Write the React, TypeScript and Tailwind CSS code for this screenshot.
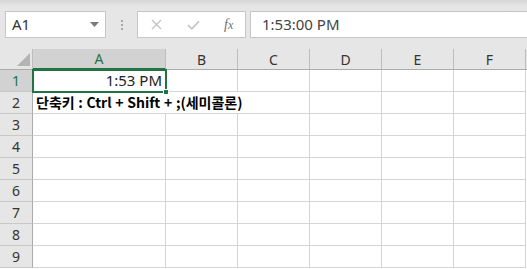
import React from "react";

const cols = [
  { key: "A", w: "w-[133px]" },
  { key: "B", w: "w-[72px]" },
  { key: "C", w: "w-[72px]" },
  { key: "D", w: "w-[72px]" },
  { key: "E", w: "w-[72px]" },
  { key: "F", w: "w-[72px]" },
];

const rows = [1, 2, 3, 4, 5, 6, 7, 8, 9];

export default function App() {
  return (
    <div
      className="relative w-[527px] h-[269px] overflow-hidden bg-white text-[#222]"
      style={{ fontFamily: '"Noto Sans", "Noto Sans CJK KR", sans-serif' }}
    >
      {/* Formula bar */}
      <div className="relative h-[49px] bg-[#e6e6e6] bg-gradient-to-b from-[#d6d6d6] via-[#e6e6e6] via-[12%] to-[#e6e6e6]">
        <div className="flex pt-[11px] pl-[5px]">
          {/* Name box */}
          <div className="flex items-center justify-between w-[101px] h-[27px] bg-white border border-[#c6c6c6] pl-[6px] pr-[6px]">
            <span className="text-[15px] text-[#333] leading-none">A1</span>
            <svg width="9" height="5" viewBox="0 0 9 5">
              <path d="M0 0 L9 0 L4.5 5 Z" fill="#7a7a7a" />
            </svg>
          </div>
          {/* Splitter dots */}
          <div className="flex flex-col gap-[2px] items-center justify-center w-[31px] h-[27px]">
            <span className="w-[2px] h-[2px] bg-[#a8a8a8]" />
            <span className="w-[2px] h-[2px] bg-[#a8a8a8]" />
            <span className="w-[2px] h-[2px] bg-[#a8a8a8]" />
          </div>
          {/* Cancel / Enter / fx */}
          <div className="flex items-center w-[109px] h-[27px] bg-white border border-[#c6c6c6]">
            <svg className="ml-[13px]" width="11" height="11" viewBox="0 0 11 11">
              <path d="M1 1 L10 10 M10 1 L1 10" stroke="#c2c2c2" strokeWidth="1.3" />
            </svg>
            <svg className="ml-[25px]" width="13" height="10" viewBox="0 0 13 10">
              <path d="M1 5 L4.8 8.8 L12 1.2" stroke="#c2c2c2" strokeWidth="1.6" fill="none" />
            </svg>
            <span
              className="ml-[24px] text-[14px] italic text-[#6e6e6e] leading-none"
              style={{ fontFamily: '"Liberation Serif", serif' }}
            >
              f<span className="text-[12px]">x</span>
            </span>
          </div>
          {/* Formula input */}
          <div className="flex items-center ml-[4px] flex-1 h-[27px] bg-white border border-[#c6c6c6] border-r-0 pl-[11px]">
            <span className="text-[15px] text-[#444] leading-none">1:53:00 PM</span>
          </div>
        </div>
      </div>

      {/* Column headers */}
      <div className="flex h-[21px] bg-[#e6e6e6] border-b border-[#ababab]">
        <div className="relative w-[33px] border-r border-[#bdbdbd]">
          <svg className="absolute left-[16px] top-[3px]" width="15" height="15" viewBox="0 0 15 15">
            <path d="M14 1 L14 14 L1 14 Z" fill="#b4b4b4" />
          </svg>
        </div>
        {cols.map((c) => (
          <div
            key={c.key}
            className={
              c.key === "A"
                ? `${c.w} flex items-center justify-center text-[14px] text-[#217346] bg-[#d2d2d2] border-r border-[#bdbdbd] border-b-2 border-b-[#217346] mb-[-1px]`
                : `${c.w} flex items-center justify-center text-[14px] text-[#333] border-r border-[#bdbdbd]`
            }
          >
            {c.key}
          </div>
        ))}
      </div>

      {/* Rows */}
      {rows.map((r) => (
        <div key={r} className="flex h-[22px]">
          <div
            className={
              r === 1
                ? "w-[33px] flex items-center justify-center text-[14px] text-[#217346] bg-[#d2d2d2] border-r border-b border-[#ababab] border-b-[#c8c8c8]"
                : "w-[33px] flex items-center justify-center text-[14px] text-[#333] bg-[#e6e6e6] border-r border-b border-[#ababab] border-b-[#c8c8c8]"
            }
          >
            {r}
          </div>
          {cols.map((c, i) => (
            <div
              key={c.key}
              className={`${c.w} relative flex items-center border-b border-[#d4d4d4] ${
                r === 2 && i < 2 ? "" : "border-r"
              } border-r-[#d4d4d4]`}
            >
              {r === 1 && c.key === "A" && (
                <span className="w-full text-right pr-[3px] text-[15px] text-[#222]">1:53 PM</span>
              )}
              {r === 2 && c.key === "A" && (
                <span
                  className="absolute left-[3px] whitespace-nowrap text-[14px] font-bold text-black [word-spacing:0.5px]"
                  style={{ fontFamily: '"Noto Sans CJK KR", sans-serif' }}
                >
                  단축키 : Ctrl + Shift + ;(세미콜론)
                </span>
              )}
            </div>
          ))}
        </div>
      ))}

      {/* Active cell outline */}
      <div className="absolute left-[32px] top-[69px] w-[135px] h-[24px] border-2 border-[#217346] pointer-events-none">
        <div className="absolute right-[-4px] bottom-[-4px] w-[6px] h-[6px] bg-[#217346] border border-white" />
      </div>
    </div>
  );
}
